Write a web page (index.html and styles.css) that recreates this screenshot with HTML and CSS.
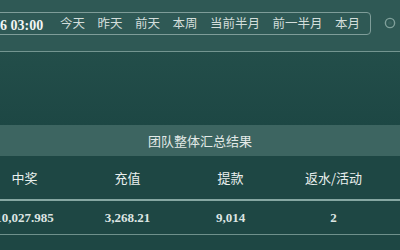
FILE: index.html
```html
<!DOCTYPE html>
<html lang="zh-CN">
<head>
<meta charset="utf-8">
<link rel="stylesheet" href="styles.css">
</head>
<body>
<div class="top">
  <div class="range">
    <span class="date-clip"><span class="date">6 03:00:00</span></span>
    <div class="quick">
      <span>今天</span><span>昨天</span><span>前天</span><span>本周</span><span>当前半月</span><span>前一半月</span><span>本月</span>
    </div>
  </div>
  <span class="clock">
    <svg width="12" height="12" viewBox="0 0 12 12"><circle cx="6" cy="6" r="4.6" fill="none" stroke="#80a09b" stroke-width="1.4"/><circle cx="6" cy="6" r="2" fill="#3a625e"/></svg>
  </span>
</div>
<div class="summary">
  <div class="spacer"></div>
  <div class="title">团队整体汇总结果</div>
  <div class="grid head">
    <span>中奖</span><span>充值</span><span>提款</span><span>返水/活动</span><span></span>
  </div>
  <div class="grid values">
    <span>10,027.985</span><span>3,268.21</span><span>9,014</span><span>2</span><span></span>
  </div>
</div>
</body>
</html>
```

FILE: styles.css
```css
html, body {
  margin: 0;
  padding: 0;
}
body {
  width: 400px;
  height: 250px;
  overflow: hidden;
  background: #1e4744;
  font-family: "Noto Sans CJK SC", "Noto Sans", sans-serif;
  color: #e2e9e7;
}
.top {
  height: 52px;
  background: #2f5955;
  border-bottom: 1px solid #739590;
  display: flex;
  align-items: flex-start;
  padding-top: 12px;
  box-sizing: border-box;
}
.range {
  margin-left: -8px;
  height: 23px;
  box-sizing: border-box;
  border: 1px solid #7f9d99;
  border-radius: 4px;
  padding-left: 7px;
  padding-right: 10px;
  display: flex;
  align-items: center;
}
.date-clip {
  width: 44px;
  overflow: hidden;
  white-space: nowrap;
  display: block;
  line-height: 1;
}
.date {
  font-family: "Liberation Serif", serif;
  font-weight: bold;
  font-size: 14px;
  color: #f2f5f4;
}
.quick {
  margin-left: 16px;
  display: flex;
  gap: 12.5px;
  font-size: 12.5px;
  color: #d3dedb;
  white-space: nowrap;
  line-height: 1;
}
.clock {
  margin-left: 13px;
  margin-top: 5px;
  display: block;
  width: 12px;
  height: 12px;
}
.clock svg {
  display: block;
}
.summary {
  background: #1e4744;
}
.spacer {
  height: 73px;
  background: linear-gradient(180deg, #234e4a 0%, #1d4744 100%);
}
.title {
  height: 31px;
  background: #3d6561;
  display: flex;
  align-items: center;
  justify-content: center;
  font-size: 13px;
  color: #e3eae8;
}
.grid {
  display: grid;
  grid-template-columns: repeat(5, 103px);
  margin-left: -27px;
  align-items: center;
  justify-items: center;
}
.head {
  height: 43px;
  font-size: 13px;
  color: #eaf0ee;
}
.values {
  height: 36px;
  box-sizing: border-box;
  border-top: 2px solid #86a7a2;
  border-bottom: 1px solid #6f918c;
  font-family: "Liberation Serif", serif;
  font-weight: bold;
  font-size: 13px;
  color: #dde5e3;
}
```
